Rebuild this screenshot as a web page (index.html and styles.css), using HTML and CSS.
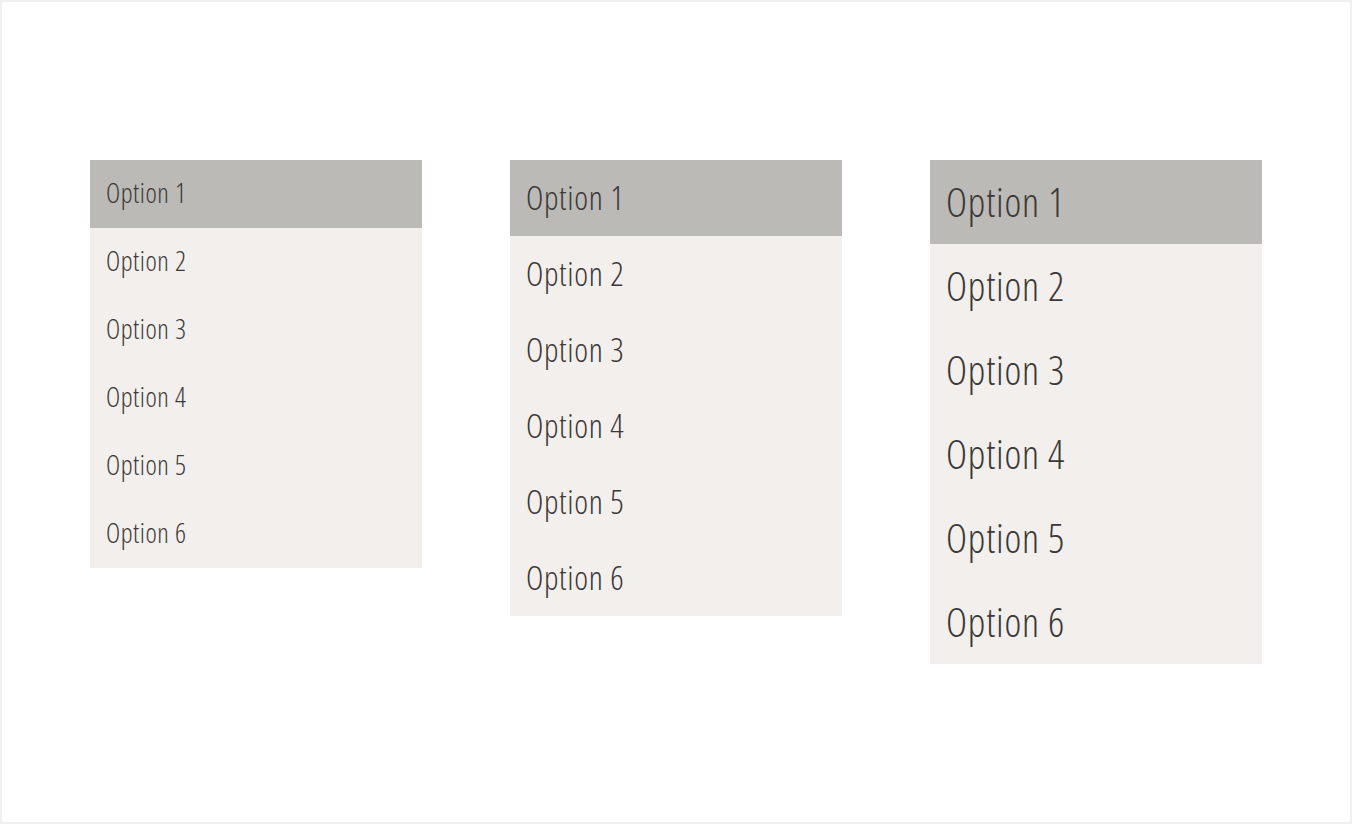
FILE: index.html
```html
<!DOCTYPE html>
<html>
<head>
<meta charset="utf-8">
<link rel="stylesheet" href="styles.css">
</head>
<body>
<div class="frame">
  <div class="lists">
    <ul class="menu menu-sm">
      <li class="item selected">Option 1</li>
      <li class="item">Option 2</li>
      <li class="item">Option 3</li>
      <li class="item">Option 4</li>
      <li class="item">Option 5</li>
      <li class="item">Option 6</li>
    </ul>
    <ul class="menu menu-md">
      <li class="item selected">Option 1</li>
      <li class="item">Option 2</li>
      <li class="item">Option 3</li>
      <li class="item">Option 4</li>
      <li class="item">Option 5</li>
      <li class="item">Option 6</li>
    </ul>
    <ul class="menu menu-lg">
      <li class="item selected">Option 1</li>
      <li class="item">Option 2</li>
      <li class="item">Option 3</li>
      <li class="item">Option 4</li>
      <li class="item">Option 5</li>
      <li class="item">Option 6</li>
    </ul>
  </div>
</div>
</body>
</html>
```
FILE: styles.css
```css
html, body { margin: 0; padding: 0; }
body { background: #fff; font-family: "Open Sans", sans-serif; }
.frame {
  box-sizing: border-box;
  width: 1352px;
  height: 824px;
  border: 2px solid #f0f0f0;
  padding: 158px 0 0 88px;
}
.lists { display: flex; gap: 88px; align-items: flex-start; }
.menu { list-style: none; margin: 0; padding: 0; width: 332px; background: #f2efec; }
.item {
  box-sizing: border-box;
  display: flex; align-items: center;
  padding-left: 16px;
  color: #3b3837;
  font-family: "Open Sans", sans-serif;
  font-stretch: 75%;
  font-weight: 300;
  letter-spacing: 0.02em;
  line-height: 1;
}
.selected { background: #bbbab6; }
.menu-sm .item { height: 68px; font-size: 27px; padding-bottom: 3px; }
.menu-md .item { height: 76px; font-size: 33px; padding-bottom: 1px; }
.menu-lg .item { height: 84px; font-size: 40px; }
```
